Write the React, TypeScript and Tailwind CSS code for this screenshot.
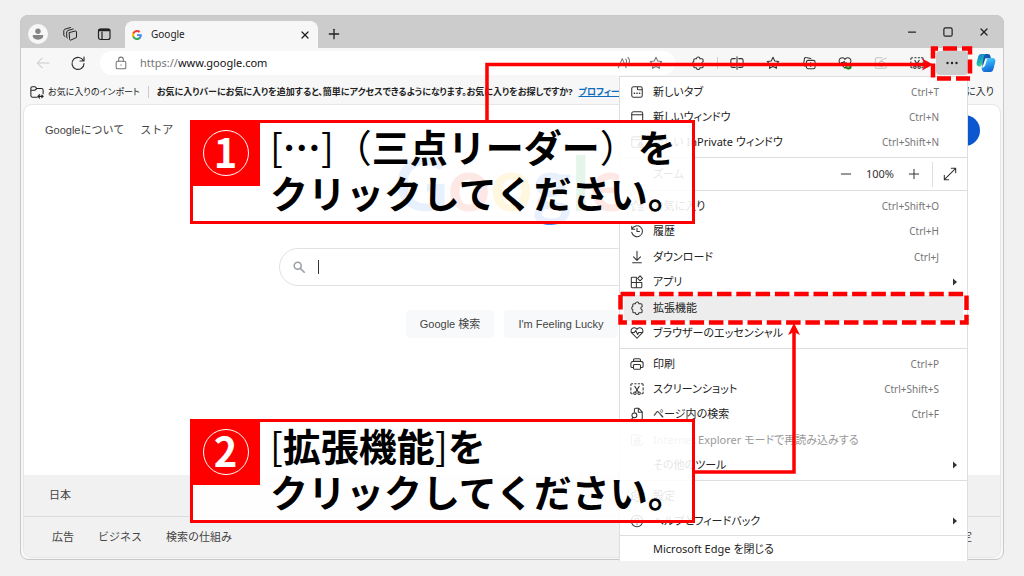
import type { ReactNode } from 'react';
import { Minus, Plus, X } from 'lucide-react';

interface MenuEntry {
  label: string;
  shortcut?: string;
  icon?: ReactNode;
  arrow?: boolean;
  disabled?: boolean;
  active?: boolean;
}

interface IconProps {
  children: ReactNode;
  className?: string;
}

// 16x16 の線画アイコンの共通枠
const Icon = ({ children, className = 'size-3.5' }: IconProps) => (
  <svg
    className={`shrink-0 ${className}`}
    viewBox="0 0 16 16"
    fill="none"
    stroke="currentColor"
    strokeWidth="1.2"
    strokeLinecap="round"
    strokeLinejoin="round"
    aria-hidden="true"
  >
    {children}
  </svg>
);

const puzzlePath =
  'M5 3.2h1.2a2 2 0 0 1 4 0H12.5a1.300 1.300 0 0 1 1.300 1.300v2a1.800 1.800 0 0 0 0 3.500v2.200a1.300 1.300 0 0 1-1.300 1.300h-2.300a2 2 0 0 1-4 0H4.500a1.300 1.300 0 0 1-1.300-1.300V10a2 2 0 0 1 0-3.700V4.500a1.300 1.300 0 0 1 1.300-1.300z';
const starPath =
  'M8 1.5l2 4.2 4.6.6-3.4 3.2.9 4.6L8 11.9l-4.1 2.2.9-4.6L1.4 6.3 6 5.7z';
const heartPath =
  'M8 14L2.3 8.2a3.6 3.6 0 0 1 0-5.1 3.6 3.6 0 0 1 5.1 0l.6.7.6-.7a3.6 3.6 0 0 1 5.1 0 3.6 3.6 0 0 1 0 5.1z';

const PuzzleIcon = () => (
  <Icon>
    <path d={puzzlePath} />
  </Icon>
);

const CaptureIcon = ({ className }: { className?: string }) => (
  <Icon className={className}>
    <path d="M1 4V3a1 1 0 0 1 1-1h1M5.5 2H7M9.5 2H11M13 2h1a1 1 0 0 1 1 1v1M15 6.5V9M1 6.5V9M1 11.5v1a1 1 0 0 0 1 1h.5M15 11.5v1a1 1 0 0 1-1 1h-.5" />
    <path d="M5.5 5l4 6.5M10.5 5l-4 6.5" />
    <circle cx="5.6" cy="12.8" r="1.4" />
    <circle cx="10.4" cy="12.8" r="1.4" />
  </Icon>
);

const InternetIcon = ({ className }: { className?: string }) => (
  <Icon className={className}>
    <path d="M9 2H3a1.5 1.5 0 0 0-1.5 1.5v9A1.5 1.5 0 0 0 3 14h9.5a1.5 1.5 0 0 0 1.5-1.5V10" />
    <path d="M5.5 9h6a3 3 0 1 0-.7 2M5.5 11.5C5 8 9 3 14 2.5" />
  </Icon>
);

const GoogleIcon = () => (
  <svg className="size-2.5 shrink-0" viewBox="0 0 48 48" aria-hidden="true">
    <path fill="#4285f4" d="M47 24.5c0-1.6-.2-3.2-.5-4.700H24v9.100h12.900c-.6 3-2.200 5.500-4.700 7.200v6h7.600c4.500-4.100 7.200-10.200 7.200-17.600z" />
    <path fill="#34a853" d="M24 48c6.500 0 11.900-2.100 15.900-5.800l-7.700-6c-2.100 1.400-4.900 2.300-8.200 2.300-6.300 0-11.600-4.200-13.500-9.900H2.600v6.200C6.500 42.600 14.600 48 24 48z" />
    <path fill="#fbbc05" d="M10.500 28.600a14.400 14.400 0 0 1 0-9.200v-6.200H2.600a24 24 0 0 0 0 21.600z" />
    <path fill="#ea4335" d="M24 9.500c3.500 0 6.700 1.200 9.200 3.600l6.800-6.800C35.900 2.400 30.500 0 24 0 14.600 0 6.500 5.400 2.600 13.200l7.900 6.200C12.400 13.700 17.700 9.500 24 9.500z" />
  </svg>
);

const CopilotIcon = () => (
  <svg className="size-5" viewBox="0 0 20 20" aria-hidden="true">
    <defs>
      <linearGradient id="copilotLeft" x1="0" y1="0" x2="0.6" y2="1">
        <stop offset="0" stopColor="#1b6fe0" />
        <stop offset="0.5" stopColor="#16a7b5" />
        <stop offset="1" stopColor="#4bdc8c" />
      </linearGradient>
      <linearGradient id="copilotRight" x1="0.3" y1="0" x2="0.6" y2="1">
        <stop offset="0" stopColor="#52d3f7" />
        <stop offset="0.5" stopColor="#2499ef" />
        <stop offset="1" stopColor="#1462cf" />
      </linearGradient>
    </defs>
    <path fill="#1556b8" d="M5.5 1H12c1.2 0 1.900.8 2.200 1.800l.8 2.500H9.500L6.500 14z" />
    <path fill="url(#copilotLeft)" d="M5.800 1H10c-1.300.4-1.800 1.500-2.200 3L5.900 11.500c-.4 1.600-1.300 2-2.400 2C1.500 13.500.2 12 .7 9.500l1.600-6C2.800 1.800 4 1 5.800 1z" />
    <path fill="url(#copilotRight)" d="M14.200 19H8.500c-1.700 0-2.400-1.500-3-4.500 1.700.4 3-.5 3.500-2.200l1.700-5.700C11.200 5 12.500 4.800 14 5h2.500c2.300 0 3.300 1.700 2.700 4l-1.600 6.500c-.6 2.400-1.700 3.500-3.400 3.500z" />
    <path fill="#fff" d="M9.200 6.800h1.500L9 12.700H7.600z" />
  </svg>
);

const menuGroups: { className: string; entries: MenuEntry[] }[] = [
  {
    className: 'h-[81px] border-b',
    entries: [
      {
        label: '新しいタブ',
        shortcut: 'Ctrl+T',
        icon: (
          <Icon>
            <path d="M4 2h8a2 2 0 0 1 2 2v8a2 2 0 0 1-2 2H4a2 2 0 0 1-2-2V4a2 2 0 0 1 2-2zM8.5 2v2.5a1 1 0 0 0 1 1H14" />
            <path d="M4.800 9.500h.4M7.800 9.500h.4M10.800 9.500h.4" strokeWidth="1.6" />
          </Icon>
        ),
      },
      {
        label: '新しいウィンドウ',
        shortcut: 'Ctrl+N',
        icon: (
          <Icon>
            <rect x="2" y="2" width="12.5" height="12" rx="2" />
            <path d="M2 5.5h12.5" />
          </Icon>
        ),
      },
      {
        label: '新しい InPrivate ウィンドウ',
        shortcut: 'Ctrl+Shift+N',
        icon: (
          <Icon>
            <path d="M8 14H4a2 2 0 0 1-2-2V4a2 2 0 0 1 2-2h7.5a2 2 0 0 1 2 2v4M2 5.5h11.5" />
            <path d="M9 10.5h6M10.5 10.5l.5-2h2l.5 2" />
            <circle cx="10.5" cy="13" r="1.3" />
            <circle cx="13.8" cy="13" r="1.3" />
          </Icon>
        ),
      },
    ],
  },
  {
    className: 'h-[158px] border-b',
    entries: [
      {
        label: 'お気に入り',
        shortcut: 'Ctrl+Shift+O',
        icon: (
          <Icon>
            <path d="M8.5 6l-2-4-1.700 3.700L1 6.300l2.800 2.900-.7 4.300 3-1.600M10 7h5M9.500 10H15M9.500 13H15" />
          </Icon>
        ),
      },
      {
        label: '履歴',
        shortcut: 'Ctrl+H',
        icon: (
          <Icon>
            <path d="M2 2.500V6h3.500M2.300 6A6.200 6.200 0 1 1 2 9.500M8 4.800v3.700h2.800" />
          </Icon>
        ),
      },
      {
        label: 'ダウンロード',
        shortcut: 'Ctrl+J',
        icon: (
          <Icon>
            <path d="M8 1.5v10M4 7.8l4 4 4-4M3 14.5h10" />
          </Icon>
        ),
      },
      {
        label: 'アプリ',
        arrow: true,
        icon: (
          <Icon>
            <path d="M1.500 3.500a1 1 0 0 1 1-1h4.800v12H2.500a1 1 0 0 1-1-1zM1.500 8.500h12v5a1 1 0 0 1-1 1H7.300" />
            <path d="M11.500 1l2.800 2.800-2.800 2.800-2.800-2.800z" />
          </Icon>
        ),
      },
      { label: '拡張機能', active: true, icon: <PuzzleIcon /> },
      {
        label: 'ブラウザーのエッセンシャル',
        icon: (
          <Icon>
            <path d={heartPath} />
            <path d="M1.500 7.500H5l1.500-2.300 2.300 4.600L10 7.500h4.500" />
          </Icon>
        ),
      },
    ],
  },
  {
    className: 'h-[132px] border-b',
    entries: [
      {
        label: '印刷',
        shortcut: 'Ctrl+P',
        icon: (
          <Icon>
            <path d="M4 5V3.500A1.500 1.500 0 0 1 5.500 2h5A1.500 1.500 0 0 1 12 3.500V5M4 12H2.500A1.500 1.500 0 0 1 1 10.500v-3A2.500 2.500 0 0 1 3.500 5h9A2.500 2.500 0 0 1 15 7.500v3a1.500 1.500 0 0 1-1.500 1.500H12" />
            <rect x="4" y="8.5" width="8" height="5.5" rx="1.2" />
          </Icon>
        ),
      },
      { label: 'スクリーンショット', shortcut: 'Ctrl+Shift+S', icon: <CaptureIcon /> },
      {
        label: 'ページ内の検索',
        shortcut: 'Ctrl+F',
        icon: (
          <Icon>
            <path d="M5 5V3a1.500 1.500 0 0 1 1.500-1.500H10l4 4V13a1.500 1.500 0 0 1-1.500 1.500H9M9.500 1.500V6H14" />
            <circle cx="5" cy="9.5" r="2.8" />
            <path d="M3.300 11.800l-1.800 2.700" />
          </Icon>
        ),
      },
      {
        label: 'Internet Explorer モードで再読み込みする',
        disabled: true,
        icon: <InternetIcon className="size-3.5 text-[#9a9a9a]" />,
      },
      { label: 'その他のツール', arrow: true },
    ],
  },
  {
    className: 'h-[55px] border-b',
    entries: [
      {
        label: '設定',
        icon: (
          <Icon>
            <circle cx="8" cy="8" r="2.2" />
            <path d="M6.800 1.500h2.400l.5 2 1.500.9 2-.6 1.200 2.100-1.500 1.400v1.600l1.500 1.400-1.200 2-2-.6-1.500.9-.5 1.900H6.800l-.5-1.900-1.500-.9-2 .6-1.200-2 1.500-1.400V7.300L1.600 5.900l1.200-2.100 2 .6 1.500-.9z" />
          </Icon>
        ),
      },
      {
        label: 'ヘルプとフィードバック',
        arrow: true,
        icon: (
          <Icon>
            <circle cx="8" cy="8" r="6.5" />
            <path d="M6.200 6.300a1.800 1.800 0 1 1 2.700 1.600c-.6.4-.9.7-.9 1.300M8 11.500v.1" />
          </Icon>
        ),
      },
    ],
  },
  {
    className: 'h-[25px]',
    entries: [{ label: 'Microsoft Edge を閉じる' }],
  },
];

const MenuItem = ({ label, shortcut, icon, arrow, disabled, active }: MenuEntry) => (
  <button
    type="button"
    role="menuitem"
    disabled={disabled}
    className={`mx-1 flex min-h-0 items-center rounded-sm pl-1.5 text-left whitespace-nowrap ${
      active ? 'bg-[#ededed]' : ''
    } ${disabled ? 'text-[#9a9a9a]' : 'text-[#222]'}`}
  >
    <span className="flex w-[23px] text-[#333]">{icon}</span>
    <span className="grow">{label}</span>
    {shortcut && <span className="pr-6 text-[10px] text-[#767676]">{shortcut}</span>}
    {arrow && (
      <svg className="mr-1 size-2" viewBox="0 0 8 8" aria-hidden="true">
        <path d="M2 0.500L6 4 2 7.500z" fill="#333" />
      </svg>
    )}
  </button>
);

const MenuGroup = ({ className, entries }: { className: string; entries: MenuEntry[] }) => (
  <div className={`grid auto-rows-fr border-[#dedede] py-0.5 ${className}`}>
    {entries.map((entry) => (
      <MenuItem key={entry.label} {...entry} />
    ))}
  </div>
);

const BrowserMenu = () => (
  <div
    role="menu"
    className="absolute top-[61px] right-[36px] flex w-[349px] flex-col border border-b-0 border-[#dedede] bg-white text-[11px] leading-4"
  >
    {menuGroups.slice(0, 1).map(({ className, entries }) => (
      <MenuGroup key={entries[0].label} className={className} entries={entries} />
    ))}
    <div className="flex h-[33px] items-center border-b border-[#dedede] pl-[33px] text-[#333]">
      <span className="grow">ズーム</span>
      <button type="button" aria-label="縮小">
        <Minus className="size-4" strokeWidth={1.5} />
      </button>
      <span className="w-[52px] text-center">100%</span>
      <button type="button" aria-label="拡大">
        <Plus className="size-4" strokeWidth={1.5} />
      </button>
      <span className="ml-2.5 h-[25px] w-px bg-[#dedede]" />
      <button type="button" aria-label="全画面表示" className="mr-2.5 ml-2.5">
        <Icon>
          <path d="M9.500 1.500h5v5M14.500 1.500l-13 13M6.500 14.500h-5v-5" />
        </Icon>
      </button>
    </div>
    {menuGroups.slice(1).map(({ className, entries }) => (
      <MenuGroup key={entries[0].label} className={className} entries={entries} />
    ))}
  </div>
);

const TitleBar = () => (
  <header className="flex h-[33px] items-end bg-[#ccc] text-[#222]">
    <div className="flex h-[27px] w-[105px] items-center pb-0.5 pl-2">
      <span className="flex size-5 items-center justify-center rounded-full bg-[#f7f7f7]">
        <svg className="size-3" viewBox="0 0 12 12" fill="#858585" aria-hidden="true">
          <circle cx="6" cy="3.2" r="2.7" />
          <path d="M1.500 7h9a.8.8 0 0 1 .8.8C11.300 10 9 11.700 6 11.700S.7 10 .7 7.800A.8.8 0 0 1 1.500 7z" />
        </svg>
      </span>
      <Icon className="ml-3.5 size-4">
        <g strokeWidth="1">
          <path d="M7.500 6.500l6-1.500a1 1 0 0 1 1 1v5.500L9 14a1 1 0 0 1-1.500-1z" />
          <path d="M5.500 12l-.8-.6V6l1-1.500 5.500-1.500M3 10.500L1.800 9.500V4.500l1-1.300L8.500 1.500" />
        </g>
      </Icon>
      <Icon className="ml-[18px] size-4">
        <rect x="2.5" y="3" width="11.5" height="10.5" rx="2" />
        <path d="M3.500 4h9.500" strokeWidth="2.5" />
        <path d="M6 6v7" />
      </Icon>
    </div>
    <div className="flex h-[27px] w-[193px] items-center rounded-t-lg bg-[#f7f7f7] px-[7px] text-[10px]">
      <GoogleIcon />
      <span className="ml-[9px] grow">Google</span>
      <button type="button" aria-label="タブを閉じる">
        <X className="size-3" strokeWidth={2.5} />
      </button>
    </div>
    <button type="button" aria-label="新しいタブを開く" className="mb-1.5 ml-2">
      <Plus className="size-4" strokeWidth={2} />
    </button>
    <div className="mb-2.5 ml-auto flex items-center gap-6 pr-3.5">
      <button type="button" aria-label="最小化">
        <Minus className="size-3" strokeWidth={2.5} />
      </button>
      <button type="button" aria-label="最大化">
        <Icon className="size-3">
          <rect x="2.5" y="2.5" width="11" height="11" rx="2" strokeWidth="1.6" />
        </Icon>
      </button>
      <button type="button" aria-label="閉じる">
        <X className="size-3" strokeWidth={2.5} />
      </button>
    </div>
  </header>
);

const Toolbar = () => (
  <div className="flex h-[30px] items-center text-[#333]">
    <button type="button" aria-label="戻る" disabled className="ml-4 text-[#ccc]">
      <Icon>
        <path d="M15 8H1.500M7 2.500L1.500 8 7 13.500" />
      </Icon>
    </button>
    <button type="button" aria-label="更新" className="ml-5">
      <Icon className="size-4">
        <path d="M13.500 6A6 6 0 1 0 14 8.500M14 2v4h-4" />
      </Icon>
    </button>
    <div className="ml-3.5 flex h-6 grow items-center rounded-full bg-white pr-3 pl-3.5 text-[11px]">
      <Icon className="size-3.5 text-[#767676]">
        <rect x="2.5" y="6" width="11" height="8.5" rx="1.5" />
        <path d="M5.300 6V4a2.700 2.700 0 0 1 5.400 0v2M8 10v.5" />
      </Icon>
      <label htmlFor="address" className="ml-3 text-[#767676]">
        https://
      </label>
      <input
        id="address"
        type="text"
        defaultValue="www.google.com"
        className="min-w-0 grow bg-transparent text-[#111] outline-none"
      />
      <Icon className="size-3.5 text-[#767676]">
        <path d="M1.500 13.500L6 3l4.500 10.500M3.200 9.500h5.600M10 3.500c1 1 1.200 2.500.7 4M12.500 1.500c2 2 2 5.500.7 8" />
      </Icon>
      <Icon className="ml-[18px] size-3.5 text-[#767676]">
        <path d={starPath} />
      </Icon>
    </div>
    <div className="ml-4 flex items-center">
      <PuzzleIcon />
      <span className="mx-3 h-3 w-px bg-[#ccc]" />
      <div className="flex items-center gap-[22px]">
        <Icon>
          <path d="M6 3H3a2 2 0 0 0-2 2v6a2 2 0 0 0 2 2h3M10 3h3a2 2 0 0 1 2 2v6a2 2 0 0 1-2 2h-3M8 1v14" />
        </Icon>
        <Icon>
          <path d={starPath} />
        </Icon>
        <Icon>
          <path d="M4 11.500l-1-.2a1.500 1.500 0 0 1-1.200-1.800l1-6.500A1.500 1.500 0 0 1 4.600 1.800l5.500 1" />
          <rect x="5" y="5" width="10" height="9.5" rx="2" />
          <path d="M10 7.500V12M7.800 9.800h4.400" />
        </Icon>
        <Icon>
          <path d={heartPath} />
          <path d="M4 7.500h2L7 6l1.500 3 1-1.500" />
          <circle cx="12" cy="12" r="3.5" fill="#107c10" stroke="none" />
          <path d="M10.500 12l1 1 2-2" stroke="#fff" strokeWidth="1" />
        </Icon>
        <InternetIcon className="size-3.5 text-[#c4c4c4]" />
        <CaptureIcon className="size-3.5" />
      </div>
    </div>
    <button
      type="button"
      aria-label="設定など"
      className="ml-3 flex h-6 w-8 items-center justify-center rounded bg-[#ccc]"
    >
      <svg className="h-1 w-3" viewBox="0 0 12 4" fill="#222" aria-hidden="true">
        <circle cx="1.5" cy="2" r="1.2" />
        <circle cx="6" cy="2" r="1.2" />
        <circle cx="10.5" cy="2" r="1.2" />
      </svg>
    </button>
    <button type="button" aria-label="Copilot" className="mr-2 ml-2">
      <CopilotIcon />
    </button>
  </div>
);

const FavoritesBar = () => (
  <div className="flex h-[27px] items-center overflow-hidden px-2.5 text-[9px] whitespace-nowrap text-[#222]">
    <Icon>
      <path d="M8 14H3a2 2 0 0 1-2-2V3.500A1.500 1.500 0 0 1 2.500 2H6l1.800 2H13a2 2 0 0 1 2 2v4M1 6h4.500l2.300-2M9 13h6M11 11l-2 2 2 2M13.500 11.500L15 13l-1.500 1.500" />
    </Icon>
    <a href="#import" className="ml-1">
      お気に入りのインポート
    </a>
    <span className="mx-2 h-3 w-px bg-[#ccc]" />
    <p className="font-bold">
      お気に入りバーにお気に入りを追加すると、簡単にアクセスできるようになります。お気に入りをお探しですか?
    </p>
    <a href="#profile" className="ml-1.5 font-bold text-[#0f6cbd] underline">
      プロフィールを確認する
    </a>
    <span className="ml-auto text-[10px]">その他のお気に入り</span>
  </div>
);

const SearchPage = () => (
  <main className="mx-1 mb-[3px] flex h-[452px] flex-col overflow-hidden rounded-lg bg-white font-['Liberation_Sans','Noto_Sans_CJK_JP',sans-serif] text-[11px] text-[#444] outline outline-[#e6e6e6] [font-feature-settings:normal]">
    <nav className="flex h-[50px] items-center gap-4 pr-5 pl-[21px]">
      <a href="#about">Googleについて</a>
      <a href="#store">ストア</a>
      <a
        href="#login"
        className="ml-auto flex h-[31px] w-[84px] items-center justify-center rounded-full bg-[#0b57d0] text-white"
      >
        ログイン
      </a>
    </nav>
    <div className="flex grow flex-col items-center">
      <h1 className="-mt-7 h-[121px] font-['Lato',sans-serif] text-[74px] leading-[112px] font-bold">
        <span className="text-[#4285f4]">G</span>
        <span className="text-[#ea4335]">o</span>
        <span className="text-[#fbbc05]">o</span>
        <span className="text-[#4285f4]">g</span>
        <span className="text-[#34a853]">l</span>
        <span className="text-[#ea4335]">e</span>
      </h1>
      <label className="flex h-[38px] w-[466px] items-center rounded-full border border-[#dfe1e5] pr-4 pl-3">
        <Icon className="size-3.5 text-[#9aa0a6]">
          <g strokeWidth="1.8">
            <circle cx="6.5" cy="6.5" r="4" />
            <path d="M9.800 9.800L14 14" />
          </g>
        </Icon>
        <span className="ml-3 h-3.5 w-px bg-[#333]" />
        <input type="text" aria-label="検索" className="min-w-0 grow bg-transparent outline-none" />
      </label>
      <div className="mt-6 flex gap-2.5">
        <button type="button" className="h-7 w-[88px] rounded bg-[#f8f9fa]">
          Google 検索
        </button>
        <button type="button" className="h-7 w-[114px] rounded bg-[#f8f9fa]">
          I'm Feeling Lucky
        </button>
      </div>
    </div>
    <footer className="bg-[#f1f1f1]">
      <p className="flex h-[42px] items-center border-b border-[#dadce0] pl-[25px]">日本</p>
      <div className="flex h-10 items-center gap-6 pr-7 pl-7">
        <a href="#ads">広告</a>
        <a href="#business">ビジネス</a>
        <a href="#how">検索の仕組み</a>
        <a href="#settings" className="ml-auto">
          設定
        </a>
      </div>
    </footer>
  </main>
);

interface CalloutProps {
  step: number;
  className: string;
  children: ReactNode;
}

const Callout = ({ step, className, children }: CalloutProps) => (
  <section
    className={`absolute right-[309px] flex h-[104px] w-[505px] border-3 border-[#f00] bg-white/88 font-['Noto_Sans_CJK_JP',sans-serif] font-bold [font-feature-settings:normal] ${className}`}
  >
    <div className="flex h-[63px] w-[67px] shrink-0 items-center justify-center bg-[#f00] pr-0.5 pb-1">
      <span className="flex size-[46px] items-center justify-center rounded-full border border-white pb-1 text-[40px] leading-none text-white">
        {step}
      </span>
    </div>
    <p className="pl-2.5 text-[38px] leading-[46px] whitespace-nowrap text-black">{children}</p>
  </section>
);

// 手順の対象を示す破線の枠と矢印
const Markers = () => (
  <svg
    className="pointer-events-none absolute top-0 right-0 h-[545px] w-[984px]"
    viewBox="20 15 984 545"
    fill="none"
    stroke="#f00"
    aria-hidden="true"
  >
    <path d="M487 121V64.500H926" strokeWidth="3.500" />
    <path d="M933 64.500L922 58.500l3 6-3 6z" fill="#f00" stroke="none" />
    <path d="M694 472H794V330" strokeWidth="3.500" />
    <path d="M794 323l-6 12 6-3 6 3z" fill="#f00" stroke="none" />
    <rect x="933" y="48.500" width="37" height="30" strokeWidth="4.500" strokeDasharray="14 5" strokeDashoffset="9" />
    <rect x="620.500" y="294" width="346" height="28.500" strokeWidth="4.500" strokeDasharray="14.500 4.800" />
  </svg>
);

export default function App() {
  return (
    <div
      lang="ja"
      className="min-h-screen bg-[#f1f1f1] px-5 pt-[15px] font-['Noto_Sans','Noto_Sans_CJK_JP',sans-serif] [font-feature-settings:'palt']"
    >
      <div className="relative">
        <div className="overflow-hidden rounded-lg bg-[#f7f7f7] outline -outline-offset-1 outline-[#c8c8c8]">
          <TitleBar />
          <Toolbar />
          <FavoritesBar />
          <SearchPage />
        </div>
        <BrowserMenu />
        <Callout step={1} className="top-[105px]">
          <span className="font-normal">[</span>…<span className="font-normal">]（</span>
          三点リーダー<span className="font-normal">）</span>を
          <br />
          クリックしてください。
        </Callout>
        <Callout step={2} className="top-[404px]">
          <span className="font-normal">[</span>拡張機能<span className="font-normal">]</span>を
          <br />
          クリックしてください。
        </Callout>
        <Markers />
      </div>
    </div>
  );
}
